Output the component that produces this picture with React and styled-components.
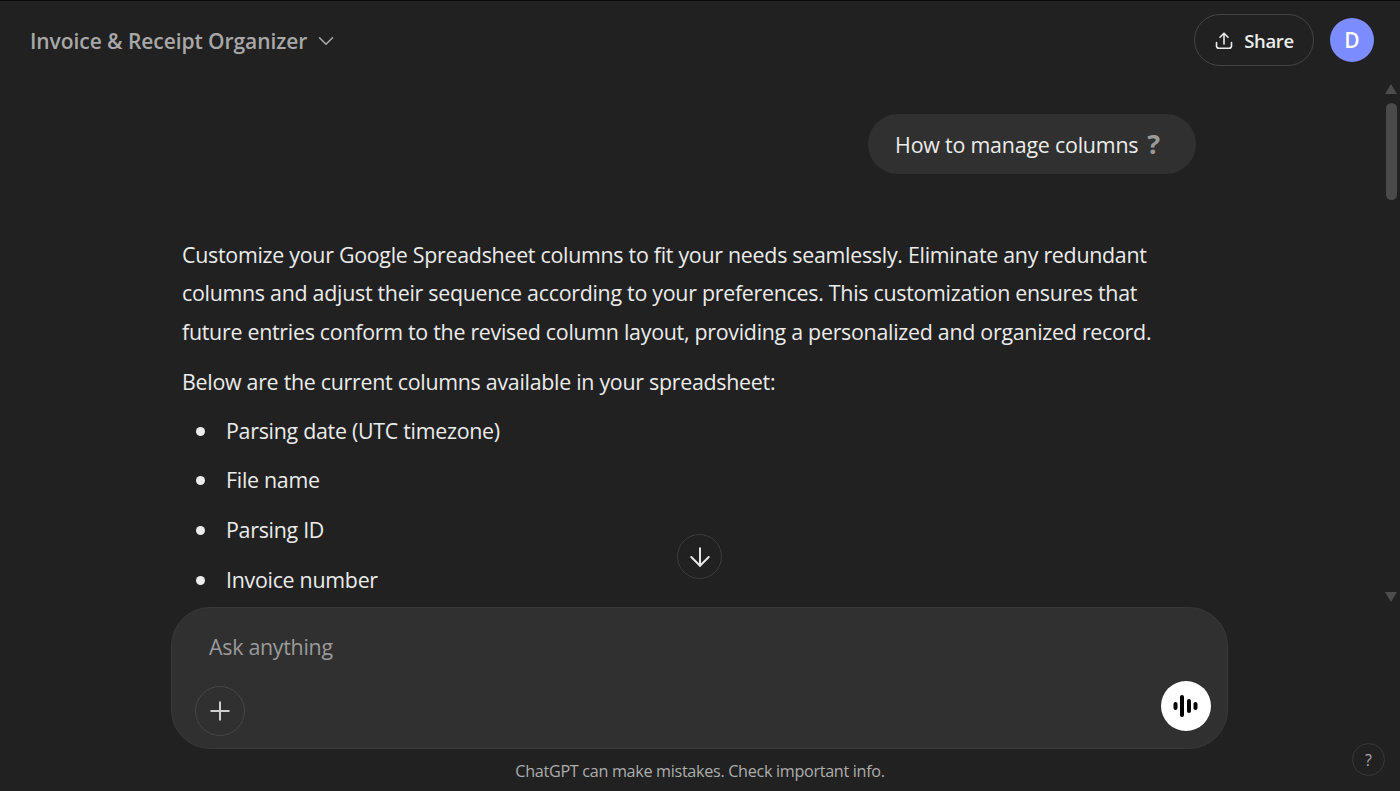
import React from "react";
import styled, { createGlobalStyle } from "styled-components";
import { ArrowDown, ChevronDown, Plus } from "lucide-react";

const GlobalStyle = createGlobalStyle`
  html, body {
    margin: 0;
    padding: 0;
    height: 100%;
    background: #212121;
  }
  * {
    box-sizing: border-box;
  }
`;

const COLUMNS = ["Parsing date (UTC timezone)", "File name", "Parsing ID", "Invoice number"];

function ShareIcon() {
  return (
    <svg width="20" height="20" viewBox="0 0 20 20" fill="none" stroke="currentColor" strokeWidth="1.6" strokeLinecap="round" strokeLinejoin="round">
      <path d="M10 13V2.5" />
      <path d="M6 6.3 10 2.3l4 4" />
      <path d="M2.5 11.5v3.2c0 1.5 1.1 2.6 2.6 2.6h9.8c1.5 0 2.6-1.1 2.6-2.6v-3.2" />
    </svg>
  );
}

function VoiceIcon() {
  return (
    <svg width="28" height="24" viewBox="0 0 28 24" fill="#000">
      <rect x="1.5" y="8" width="4" height="8" rx="2" />
      <rect x="8" y="1" width="4" height="22" rx="2" />
      <rect x="15" y="5" width="4" height="14" rx="2" />
      <rect x="21.5" y="8" width="4" height="8" rx="2" />
    </svg>
  );
}

export default function App() {
  return (
    <Page>
      <GlobalStyle />
      <Header>
        <Title>
          Invoice &amp; Receipt Organizer
          <ChevronDown size={26} strokeWidth={1.5} />
        </Title>
        <HeaderActions>
          <ShareButton>
            <ShareIcon />
            Share
          </ShareButton>
          <Avatar>D</Avatar>
        </HeaderActions>
      </Header>
      <Middle>
        <Thread>
          <UserRow>
            <UserBubble>
              How to manage columns <QuestionMark>?</QuestionMark>
            </UserBubble>
          </UserRow>
          <Paragraph>
            Customize your Google Spreadsheet columns to fit your needs seamlessly. Eliminate any redundant
            columns and adjust their sequence according to your preferences. This customization ensures that
            future entries conform to the revised column layout, providing a personalized and organized record.
          </Paragraph>
          <Paragraph>Below are the current columns available in your spreadsheet:</Paragraph>
          <ColumnList>
            {COLUMNS.map((name) => (
              <ColumnItem key={name}>{name}</ColumnItem>
            ))}
          </ColumnList>
        </Thread>
        <ScrollTrack>
          <ArrowUp />
          <Thumb />
          <ArrowDownTip />
        </ScrollTrack>
        <ScrollDownButton>
          <ArrowDown size={30} strokeWidth={1.6} />
        </ScrollDownButton>
      </Middle>
      <ComposerWrap>
        <Composer>
          <Placeholder>Ask anything</Placeholder>
          <ComposerActions>
            <PlusButton>
              <Plus size={30} strokeWidth={1.6} />
            </PlusButton>
            <VoiceButton>
              <VoiceIcon />
            </VoiceButton>
          </ComposerActions>
        </Composer>
      </ComposerWrap>
      <Disclaimer>ChatGPT can make mistakes. Check important info.</Disclaimer>
      <HelpButton>?</HelpButton>
    </Page>
  );
}

const Page = styled.div`
  position: relative;
  display: flex;
  flex-direction: column;
  height: 791px;
  overflow: hidden;
  background: #212121;
  border-top: 1px solid #0a0a0a;
  font-family: "Open Sans", "Noto Sans", sans-serif;
  color: #ececec;
`;

const Header = styled.header`
  display: flex;
  justify-content: space-between;
  align-items: center;
  height: 80px;
  padding: 0 26px 0 30px;
  flex-shrink: 0;
`;

const Title = styled.div`
  display: flex;
  align-items: center;
  gap: 6px;
  font-size: 21px;
  font-weight: 600;
  letter-spacing: -0.07px;
  color: #a8a8a8;
`;

const HeaderActions = styled.div`
  display: flex;
  align-items: center;
  gap: 16px;
  margin-top: -3px;
`;

const ShareButton = styled.button`
  display: flex;
  align-items: center;
  justify-content: center;
  gap: 10px;
  width: 120px;
  height: 52px;
  padding: 2px 0 0;
  background: transparent;
  border: 1px solid #444;
  border-radius: 26px;
  color: #ececec;
  font: 600 18.5px "Open Sans", sans-serif;
  letter-spacing: -0.4px;
`;

const Avatar = styled.div`
  display: flex;
  align-items: center;
  justify-content: center;
  width: 44px;
  height: 44px;
  border-radius: 50%;
  background: #7b8cff;
  color: #fff;
  font-size: 21px;
  font-weight: 600;
`;

const Middle = styled.div`
  position: relative;
  display: flex;
  height: 526px;
  flex-shrink: 0;
`;

const Thread = styled.main`
  flex: 1;
  overflow: hidden;
  padding: 33px 188px 0 182px;
  font-size: 21.4px;
  letter-spacing: -0.28px;
  line-height: 38.4px;
  color: #ececec;
`;

const UserRow = styled.div`
  display: flex;
  justify-content: flex-end;
  margin-bottom: 62px;
`;

const UserBubble = styled.div`
  display: flex;
  align-items: center;
  gap: 9px;
  height: 60px;
  padding: 3px 36px 0 27px;
  border-radius: 30px;
  background: #303030;
  letter-spacing: -0.2px;
`;

const QuestionMark = styled.span`
  margin-top: -3px;
  font-weight: 700;
  font-size: 27px;
  color: #9a9a9a;
`;

const Paragraph = styled.p`
  max-width: 985px;
  margin: 0 0 12px;
`;

const ColumnList = styled.ul`
  margin: -2px 0 0;
  padding: 0 0 0 44px;
  list-style: none;
`;

const ColumnItem = styled.li`
  position: relative;
  margin-bottom: 11.3px;
  &::before {
    content: "";
    position: absolute;
    left: -30px;
    top: 15px;
    width: 9px;
    height: 9px;
    border-radius: 50%;
    background: #ececec;
  }
`;

const ScrollTrack = styled.div`
  display: flex;
  flex-direction: column;
  align-items: center;
  width: 14px;
  margin-right: 2px;
  padding-top: 3px;
  flex-shrink: 0;
`;

const ArrowUp = styled.div`
  width: 0;
  height: 0;
  border-left: 6px solid transparent;
  border-right: 6px solid transparent;
  border-bottom: 10px solid #4d4d4d;
`;

const Thumb = styled.div`
  width: 11px;
  height: 97px;
  margin-top: 9px;
  border-radius: 6px;
  background: #4a4a4a;
`;

const ArrowDownTip = styled.div`
  width: 0;
  height: 0;
  margin-top: auto;
  margin-bottom: 5px;
  border-left: 6px solid transparent;
  border-right: 6px solid transparent;
  border-top: 10px solid #4d4d4d;
`;

const ScrollDownButton = styled.button`
  position: absolute;
  left: 677px;
  top: 453px;
  display: flex;
  align-items: center;
  justify-content: center;
  width: 45px;
  height: 45px;
  padding: 0;
  border-radius: 50%;
  border: 1px solid #3c3c3c;
  background: #212121;
  color: #e6e6e6;
`;

const ComposerWrap = styled.div`
  display: flex;
  justify-content: flex-start;
  padding-left: 171px;
  flex-shrink: 0;
`;

const Composer = styled.div`
  display: flex;
  flex-direction: column;
  justify-content: space-between;
  width: 1057px;
  height: 142px;
  padding: 20px 16px 12px 23px;
  border-radius: 39px;
  background: #303030;
  border: 1px solid #383838;
`;

const Placeholder = styled.div`
  padding-left: 14px;
  font-size: 21.4px;
  letter-spacing: -0.28px;
  line-height: 38px;
  color: #9b9b9b;
`;

const ComposerActions = styled.div`
  display: flex;
  justify-content: space-between;
  align-items: flex-end;
`;

const PlusButton = styled.button`
  display: flex;
  align-items: center;
  justify-content: center;
  width: 50px;
  height: 50px;
  padding: 0;
  border-radius: 50%;
  border: 1px solid #464646;
  background: transparent;
  color: #cfcfcf;
`;

const VoiceButton = styled.button`
  display: flex;
  align-items: center;
  justify-content: center;
  width: 50px;
  height: 50px;
  margin-bottom: 5px;
  padding: 0;
  border: none;
  border-radius: 50%;
  background: #fff;
`;

const Disclaimer = styled.div`
  display: flex;
  align-items: center;
  justify-content: center;
  flex: 1;
  padding-top: 2px;
  font-size: 16.2px;
  letter-spacing: -0.32px;
  color: #adadad;
`;

const HelpButton = styled.button`
  position: absolute;
  right: 15px;
  bottom: 15px;
  width: 33px;
  height: 33px;
  padding: 0;
  border-radius: 50%;
  border: 1px solid #383838;
  background: transparent;
  color: #a8a8a8;
  font: 16px "Open Sans", sans-serif;
`;
